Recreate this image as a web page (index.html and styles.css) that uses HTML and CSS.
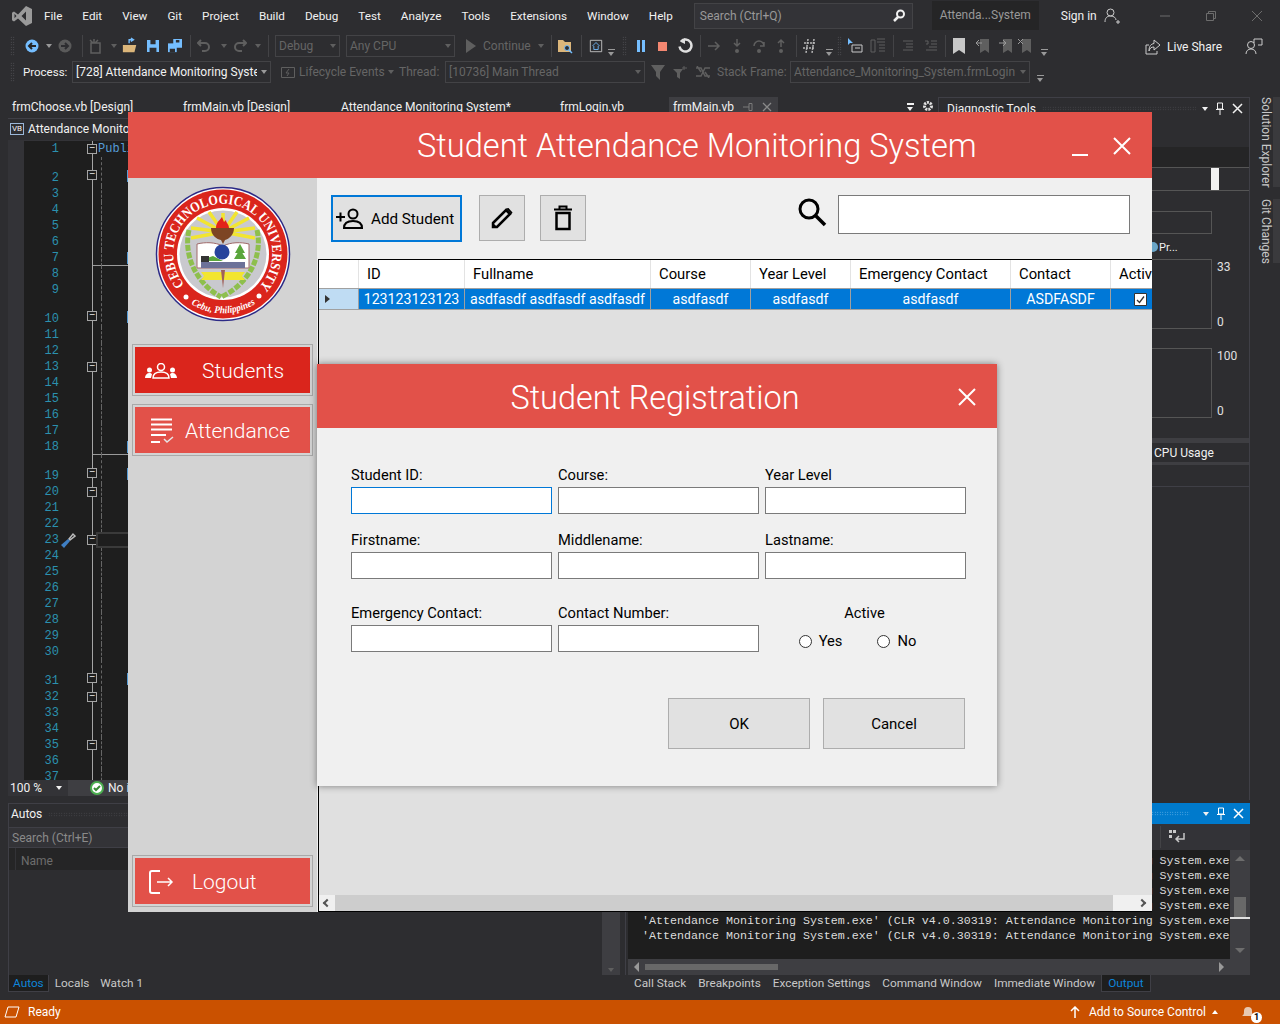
FILE: index.html
```html
<!DOCTYPE html>
<html lang="en">
<head>
<meta charset="UTF-8">
<title>Student Attendance Monitoring System</title>
<link rel="stylesheet" href="styles.css">
</head>
<body>
<div class="ide">

  <!-- menu bar -->
  <header class="menubar">
    <svg class="vs-logo" width="22" height="22" viewBox="0 0 22 22"><path d="M15 1l6 3v14l-6 3-8-7.5-4 3-2-1.2V7.700l2-1.200 4 3zM15 6.500L10.500 11 15 15.500zM3.500 8.800v4.400L5.500 11z" fill="#9a9a9a" fill-rule="evenodd"/></svg>
    <nav class="menu">
      <span>File</span><span>Edit</span><span>View</span><span>Git</span><span>Project</span><span>Build</span><span>Debug</span><span>Test</span><span>Analyze</span><span>Tools</span><span>Extensions</span><span>Window</span><span>Help</span>
    </nav>
    <div class="quick-search">
      <span>Search (Ctrl+Q)</span>
      <svg width="14" height="14" viewBox="0 0 14 14"><circle cx="8.500" cy="5" r="3.500" fill="none" stroke="#f1f1f1" stroke-width="2"/><path d="M6 8l-4 4" stroke="#f1f1f1" stroke-width="2.500"/></svg>
    </div>
    <div class="project-name">Attenda...System</div>
    <span class="sign-in">Sign in</span>
    <svg class="sign-icon" width="16" height="16" viewBox="0 0 16 16"><circle cx="6.500" cy="4.500" r="3.500" fill="none" stroke="#ccc"/><path d="M1 14c0-4 2-6 5.500-6S12 10 12 12M12 14h4M14 12v4" fill="none" stroke="#ccc"/></svg>
    <div class="win-controls">
      <svg width="12" height="12" viewBox="0 0 12 12"><path d="M1 6h10" stroke="#6d6d6d"/></svg>
      <svg width="12" height="12" viewBox="0 0 12 12"><path d="M1.500 3.500h7v7h-7zM3.500 3.500v-2h7v7h-2" fill="none" stroke="#6d6d6d"/></svg>
      <svg width="12" height="12" viewBox="0 0 12 12"><path d="M1 1l10 10M11 1L1 11" stroke="#6d6d6d"/></svg>
    </div>
  </header>

  <!-- standard + debug toolbar -->
  <div class="toolbar tb-main">
    <i class="s"><i class="grip"></i></i>
    <i class="s g4"><svg width="14" height="14" viewBox="0 0 14 14"><circle cx="7" cy="7" r="6.500" fill="#75beff"/><path d="M11 7H5M7 4L4 7l3 3" fill="none" stroke="#252526" stroke-width="2"/></svg></i>
    <i class="s g1"><i class="caret"></i></i>
    <i class="s"><svg width="14" height="14" viewBox="0 0 14 14"><circle cx="7" cy="7" r="6.500" fill="#5a5a5a"/><path d="M3 7h6M7 4l3 3-3 3" fill="none" stroke="#2d2d30" stroke-width="2"/></svg></i>
    <i class="s g1"><i class="sep"></i></i>
    <i class="s n2"><svg width="16" height="16" viewBox="0 0 16 16"><path d="M3 5h9v10H3zM6 1v4M2 2l3 3M10 2L7 5" fill="none" stroke="#5f5f5f" stroke-width="1.500"/></svg></i>
    <i class="s g2"><i class="caret dim"></i></i>
    <i class="s"><svg width="18" height="18" viewBox="0 0 18 18"><path d="M1 8h15l-2 8H1z" fill="#dcb67a"/><path d="M8 6V2h4M10 0l3 2-3 2" fill="none" stroke="#75beff" stroke-width="1.500"/></svg></i>
    <i class="s g7"><svg width="12" height="12" viewBox="0 0 14 14"><path d="M0 0h14v14H0z" fill="#75beff"/><path d="M4 0h6v5H4zM3 9h8v5H3z" fill="#2d2d30"/></svg></i>
    <i class="s g6"><svg width="14" height="14" viewBox="0 0 16 16"><path d="M0 5h10v10H0z" fill="#75beff"/><path d="M6 0h10v10H6z" fill="#75beff"/><path d="M9 1h4v3H9zM2 11h6v4H2z" fill="#2d2d30"/></svg></i>
    <i class="s n1"><i class="sep"></i></i>
    <i class="s n2"><svg width="14" height="14" viewBox="0 0 14 14"><path d="M4 1L1 4l3 3M1 4h7a4 4 0 0 1 0 8H5" fill="none" stroke="#5f5f5f" stroke-width="2"/></svg></i>
    <i class="s g4"><i class="caret dim"></i></i>
    <i class="s"><svg width="14" height="14" viewBox="0 0 14 14"><path d="M10 1l3 3-3 3M13 4H6a4 4 0 0 0 0 8h3" fill="none" stroke="#5f5f5f" stroke-width="2"/></svg></i>
    <i class="s g2"><i class="caret dim"></i></i>
    <i class="s n6"><i class="sep"></i></i>
    <span class="combo off w-debug n1">Debug<i class="caret dim"></i></span>
    <span class="combo off w-cpu g6">Any CPU<i class="caret dim"></i></span>
    <i class="s g8"><svg width="12" height="14" viewBox="0 0 12 14"><path d="M1 0l10 7-10 7z" fill="#5f5f5f"/></svg></i>
    <span class="tb-text off continue">Continue</span>
    <i class="s"><i class="caret dim"></i></i>
    <i class="s n6"><i class="sep"></i></i>
    <i class="s n2"><svg width="16" height="16" viewBox="0 0 16 16"><path d="M1 2h5l2 2h6v10H1z" fill="#dcb67a"/><circle cx="10" cy="10" r="2.500" fill="#2d2d30" stroke="#75beff"/><path d="M12 12l3 3" stroke="#75beff" stroke-width="1.500"/></svg></i>
    <i class="s"><i class="sep"></i></i>
    <i class="s n1"><svg width="14" height="14" viewBox="0 0 16 16"><path d="M1.500 1.500h13v13h-13z" fill="none" stroke="#c8c8c8"/><path d="M4 8l4-4 4 4M5.500 8v4h5V8" fill="none" stroke="#75beff"/></svg></i>
    <i class="s n1"><i class="drop"></i></i>
    <i class="s n3"><i class="grip"></i></i>
    <i class="s g1"><svg width="10" height="12" viewBox="0 0 10 12"><path d="M1 0h3v12H1zM6 0h3v12H6z" fill="#75beff"/></svg></i>
    <i class="s g5"><svg width="9" height="9" viewBox="0 0 10 10"><path d="M0 0h10v10H0z" fill="#f48771"/></svg></i>
    <i class="s g7"><svg width="16" height="16" viewBox="0 0 16 16"><path d="M4 3.500a6 6 0 1 1-1.500 5" fill="none" stroke="#e0e0e0" stroke-width="2.500"/><path d="M8 0L3 3.500 8 6z" fill="#e0e0e0"/></svg></i>
    <i class="s n1"><i class="sep"></i></i>
    <i class="s n2"><svg width="14" height="14" viewBox="0 0 14 14"><path d="M1 7h11M8 3l4 4-4 4" fill="none" stroke="#5f5f5f" stroke-width="1.500"/></svg></i>
    <i class="s g7"><svg width="10" height="16" viewBox="0 0 10 16"><path d="M5 1v7M2 5l3 3 3-3" fill="none" stroke="#5f5f5f" stroke-width="1.500"/><circle cx="5" cy="13" r="2" fill="#5f5f5f"/></svg></i>
    <i class="s g6"><svg width="14" height="16" viewBox="0 0 14 16"><path d="M2 8a5 5 0 0 1 10 0M12 4v4H8" fill="none" stroke="#5f5f5f" stroke-width="1.500"/><circle cx="7" cy="13" r="2" fill="#5f5f5f"/></svg></i>
    <i class="s g6"><svg width="10" height="16" viewBox="0 0 10 16"><path d="M5 9V2M2 5l3-3 3 3" fill="none" stroke="#5f5f5f" stroke-width="1.500"/><circle cx="5" cy="13" r="2" fill="#5f5f5f"/></svg></i>
    <i class="s n1"><i class="sep"></i></i>
    <i class="s n2"><svg width="16" height="16" viewBox="0 0 16 16"><path d="M2 5h12M1 10h12M6 1L4 15M12 1l-2 14" stroke="#b8b8b8" stroke-width="1.500" stroke-dasharray="2 1"/></svg></i>
    <i class="s g3"><i class="drop"></i></i>
    <i class="s n6"><i class="grip"></i></i>
    <i class="s"><svg width="16" height="16" viewBox="0 0 16 16"><path d="M1 0l5 5H3l-2 2z" fill="#75beff"/><path d="M5 7h10v7H5zM8 10h5" fill="none" stroke="#c8c8c8"/></svg></i>
    <i class="s g7"><svg width="16" height="16" viewBox="0 0 16 16"><path d="M1 2h4v12H1zM7 1h8M7 4h8M9 7h6M9 10h6M9 13h6" fill="none" stroke="#5f5f5f"/></svg></i>
    <i class="s n1"><i class="sep"></i></i>
    <i class="s n1"><svg width="14" height="14" viewBox="0 0 14 14"><path d="M2 2h10M5 5h7M5 8h7M2 11h10" stroke="#5f5f5f"/></svg></i>
    <i class="s g7"><svg width="14" height="14" viewBox="0 0 14 14"><path d="M1 2h3v3H2M7 2h6M7 5h6M5 8h8M2 11h11" fill="none" stroke="#5f5f5f"/></svg></i>
    <i class="s n2"><i class="sep"></i></i>
    <i class="s n2"><svg width="12" height="16" viewBox="0 0 12 16"><path d="M0 0h12v16l-6-4-6 4z" fill="#c8c8c8"/></svg></i>
    <i class="s g8"><svg width="14" height="16" viewBox="0 0 14 16"><path d="M4 1h9v14l-4-3-5 3z" fill="#5f5f5f"/><path d="M0 5h6M3 2L0 5l3 3" fill="none" stroke="#9a9a9a"/></svg></i>
    <i class="s g7"><svg width="14" height="16" viewBox="0 0 14 16"><path d="M4 1h9v14l-4-3-5 3z" fill="#5f5f5f"/><path d="M0 5h6M4 2l3 3-3 3" fill="none" stroke="#9a9a9a"/></svg></i>
    <i class="s g3"><svg width="14" height="16" viewBox="0 0 14 16"><path d="M4 1h9v14l-4-3-5 3z" fill="#5f5f5f"/><path d="M0 1l5 5M5 1L0 6" stroke="#9a9a9a"/></svg></i>
    <i class="s g3"><i class="drop"></i></i>
    <div class="live-share">
      <svg width="16" height="16" viewBox="0 0 16 16"><path d="M4 6H1v9h11v-3" fill="none" stroke="#ccc"/><path d="M9 1l6 5-6 5V8C6 8 5 9 4 12c0-5 2-7 5-7.500z" fill="none" stroke="#ccc"/></svg>
      <span>Live Share</span>
      <svg class="feedback" width="18" height="18" viewBox="0 0 18 18"><circle cx="6" cy="7" r="3.500" fill="none" stroke="#ccc"/><path d="M1 16c0-3 2-5 5-5s5 2 5 5M9 5V1h8v6h-4" fill="none" stroke="#ccc"/></svg>
    </div>
  </div>

  <div class="toolbar tb-debug">
    <i class="s"><i class="grip"></i></i>
    <span class="tb-text process">Process:</span>
    <span class="combo w-process"><em>[728] Attendance Monitoring System</em><i class="caret"></i></span>
    <i class="s lifecycle-icon"><svg width="14" height="14" viewBox="0 0 14 14"><path d="M.5 2.500h13v10H.5z" fill="none" stroke="#5f5f5f"/><path d="M8 4L5 8h3l-2 3" fill="none" stroke="#5f5f5f"/></svg></i>
    <span class="tb-text off lifecycle">Lifecycle Events</span>
    <i class="caret dim lc-caret"></i>
    <span class="tb-text off thread">Thread:</span>
    <span class="combo off w-thread"><em>[10736] Main Thread</em><i class="caret dim"></i></span>
    <i class="s filter-a"><svg width="14" height="16" viewBox="0 0 14 16"><path d="M0 1h14L9 8v8L5 12V8z" fill="#5f5f5f"/></svg></i>
    <i class="s g6"><svg width="14" height="14" viewBox="0 0 14 14"><path d="M0 4h10L7 8v6L4 12V8z" fill="#5f5f5f"/><path d="M9 3h5M11 1v4" stroke="#5f5f5f"/></svg></i>
    <i class="s g7"><svg width="14" height="12" viewBox="0 0 14 12"><path d="M0 2h5l4 8h5M0 10h5l4-8h5M1 0l4 6M9 6l4 6" fill="none" stroke="#5f5f5f" stroke-width="1.500"/></svg></i>
    <span class="tb-text off frame">Stack Frame:</span>
    <span class="combo off w-frame"><em>Attendance_Monitoring_System.frmLogin</em><i class="caret dim"></i></span>
    <i class="s drop-last"><i class="drop"></i></i>
  </div>

  <div class="workspace">
    <div class="upper">
      <!-- editor, almost all of it behind the running program -->
      <section class="editor-pane">
        <div class="doc-tabs">
          <span class="t-choose">frmChoose.vb [Design]</span>
          <span class="t-main">frmMain.vb [Design]</span>
          <span class="t-system">Attendance Monitoring System*</span>
          <span class="t-login">frmLogin.vb</span>
          <span class="t-active">frmMain.vb
            <svg width="12" height="10" viewBox="0 0 12 10"><path d="M1 5h6M7 1.500h3v7H7z" fill="none" stroke="#7a7a7a"/></svg>
            <svg width="10" height="10" viewBox="0 0 10 10"><path d="M1 1l8 8M9 1L1 9" stroke="#8a8a8a" stroke-width="1.300"/></svg>
          </span>
          <span class="tab-tools">
            <i class="drop light"></i>
            <svg width="12" height="12" viewBox="0 0 12 12"><circle cx="6" cy="6" r="3.500" fill="none" stroke="#e0e0e0" stroke-width="3" stroke-dasharray="2 1"/></svg>
          </span>
        </div>
        <div class="nav-bar"><i class="vb-badge">VB</i>Attendance Monitoring System</div>
        <div class="code">
          <div class="ln"><b>1</b><u></u><s><a>−</a></s><span class="src first">Public Class frmMain</span></div>
          <div class="ln lens"><b>2</b><u></u><s><a>−</a></s><span class="src"><i></i></span></div>
          <div class="ln"><b>3</b><u></u><s></s><span class="src"></span></div>
          <div class="ln"><b>4</b><u></u><s></s><span class="src"></span></div>
          <div class="ln"><b>5</b><u></u><s></s><span class="src"></span></div>
          <div class="ln"><b>6</b><u></u><s></s><span class="src"></span></div>
          <div class="ln rule"><b>7</b><u></u><s></s><span class="src"><i></i></span></div>
          <div class="ln"><b>8</b><u></u><s></s><span class="src"></span></div>
          <div class="ln"><b>9</b><u></u><s></s><span class="src"></span></div>
          <div class="ln lens"><b>10</b><u></u><s><a>−</a></s><span class="src"><i></i></span></div>
          <div class="ln"><b>11</b><u></u><s></s><span class="src"></span></div>
          <div class="ln"><b>12</b><u></u><s></s><span class="src"></span></div>
          <div class="ln"><b>13</b><u></u><s><a>−</a></s><span class="src"></span></div>
          <div class="ln"><b>14</b><u></u><s></s><span class="src"></span></div>
          <div class="ln"><b>15</b><u></u><s></s><span class="src"></span></div>
          <div class="ln"><b>16</b><u></u><s></s><span class="src"></span></div>
          <div class="ln"><b>17</b><u></u><s></s><span class="src"></span></div>
          <div class="ln rule"><b>18</b><u></u><s></s><span class="src"><i></i></span></div>
          <div class="ln lens"><b>19</b><u></u><s><a>−</a></s><span class="src"><i></i></span></div>
          <div class="ln"><b>20</b><u></u><s><a>−</a></s><span class="src"></span></div>
          <div class="ln"><b>21</b><u></u><s></s><span class="src"></span></div>
          <div class="ln"><b>22</b><u></u><s></s><span class="src"></span></div>
          <div class="ln cur"><b>23</b><u><svg width="16" height="16" viewBox="0 0 16 16"><path d="M9 7l4-5 2 2-5 4z" fill="none" stroke="#bbb" stroke-width="1.500"/><path d="M1 13l7-6 2 2-6 7z" fill="#3f7fc4"/></svg></u><s><a>−</a></s><span class="src"></span></div>
          <div class="ln"><b>24</b><u></u><s></s><span class="src"></span></div>
          <div class="ln"><b>25</b><u></u><s></s><span class="src"></span></div>
          <div class="ln"><b>26</b><u></u><s></s><span class="src"></span></div>
          <div class="ln"><b>27</b><u></u><s></s><span class="src"></span></div>
          <div class="ln"><b>28</b><u></u><s></s><span class="src"></span></div>
          <div class="ln"><b>29</b><u></u><s></s><span class="src"></span></div>
          <div class="ln"><b>30</b><u></u><s></s><span class="src"></span></div>
          <div class="ln lens"><b>31</b><u></u><s><a>−</a></s><span class="src"><i></i></span></div>
          <div class="ln"><b>32</b><u></u><s><a>−</a></s><span class="src"></span></div>
          <div class="ln"><b>33</b><u></u><s></s><span class="src"></span></div>
          <div class="ln"><b>34</b><u></u><s></s><span class="src"></span></div>
          <div class="ln"><b>35</b><u></u><s><a>−</a></s><span class="src"></span></div>
          <div class="ln"><b>36</b><u></u><s></s><span class="src"></span></div>
          <div class="ln"><b>37</b><u></u><s></s><span class="src"></span></div>
        </div>
        <div class="editor-foot">
          <span class="zoom-combo">100 %<i class="caret light"></i></span>
          <svg width="14" height="14" viewBox="0 0 14 14"><circle cx="7" cy="7" r="6" fill="#fff" stroke="#4caf50" stroke-width="2"/><path d="M4 7l2 2 4-4" fill="none" stroke="#388a34" stroke-width="2"/></svg>
          <span>No issues found</span>
        </div>
      </section>

      <!-- diagnostic tools -->
      <section class="diag">
        <div class="diag-head">
          <span>Diagnostic Tools</span>
          <i class="dots"></i>
          <span class="pane-btns"><i class="caret light"></i><svg width="10" height="14" viewBox="0 0 10 14"><path d="M2.500 1h5v6h-5zM1 7.500h8M5 8v5" fill="none" stroke="#f1f1f1"/></svg><svg width="11" height="11" viewBox="0 0 11 11"><path d="M1 1l9 9M10 1l-9 9" stroke="#f1f1f1" stroke-width="1.500"/></svg></span>
        </div>
        <div class="diag-band"></div>
        <div class="timeline"><i></i></div>
        <div class="diag-box"></div>
        <div class="proc"><i></i>Pr...</div>
        <div class="graph first-graph"><div class="plot"></div><div class="scale"><span>33</span><span>0</span></div></div>
        <div class="graph"><div class="plot"></div><div class="scale"><span>100</span><span>0</span></div></div>
        <div class="diag-strip"></div>
        <div class="cpu-tab">CPU Usage</div>
        <div class="diag-strip thin"></div>
        <div class="diag-line"></div>
      </section>
    </div>

    <div class="lower">
      <section class="autos">
        <div class="pane-title"><span>Autos</span><i class="dots"></i></div>
        <div class="pane-search">Search (Ctrl+E)</div>
        <div class="pane-cols"><span>Name</span></div>
        <div class="autos-body"><div class="vscroll"><i class="caret dim"></i></div></div>
      </section>
      <section class="output">
        <div class="output-title"><span>Output</span><i class="dots bright"></i><span class="pane-btns"><i class="caret light"></i><svg width="10" height="14" viewBox="0 0 10 14"><path d="M2.500 1h5v6h-5zM1 7.500h8M5 8v5" fill="none" stroke="#fff"/></svg><svg width="11" height="11" viewBox="0 0 11 11"><path d="M1 1l9 9M10 1l-9 9" stroke="#fff" stroke-width="1.500"/></svg></span></div>
        <div class="output-tools">
          <i class="sep"></i>
          <svg width="16" height="14" viewBox="0 0 16 14"><path d="M15 3v6H7M10 6L7 9l3 3" fill="none" stroke="#c8c8c8" stroke-width="1.500"/><path d="M0 0h3v3H0zM4 0h3v3H4zM0 5h3v3H0z" fill="#c8c8c8"/></svg>
        </div>
        <div class="output-body">
          <pre class="log">'Attendance Monitoring System.exe' (CLR v4.0.30319: Attendance Monitoring System.exe
'Attendance Monitoring System.exe' (CLR v4.0.30319: Attendance Monitoring System.exe
'Attendance Monitoring System.exe' (CLR v4.0.30319: Attendance Monitoring System.exe
'Attendance Monitoring System.exe' (CLR v4.0.30319: Attendance Monitoring System.exe
'Attendance Monitoring System.exe' (CLR v4.0.30319: Attendance Monitoring System.exe
'Attendance Monitoring System.exe' (CLR v4.0.30319: Attendance Monitoring System.exe</pre>
          <div class="log-scroll"><i class="up"></i><b></b><u></u><i class="down"></i></div>
        </div>
        <div class="log-hscroll"><i class="left"></i><b></b><i class="right"></i></div>
      </section>
    </div>

    <div class="bottom-tabs">
      <div class="tabs-left"><span class="on">Autos</span><span>Locals</span><span>Watch 1</span></div>
      <div class="tabs-right"><span>Call Stack</span><span>Breakpoints</span><span>Exception Settings</span><span>Command Window</span><span>Immediate Window</span><span class="on">Output</span></div>
    </div>

    <aside class="rail">
      <span class="rail-a">Solution Explorer</span>
      <span class="rail-b">Git Changes</span>
    </aside>
  </div>

  <footer class="statusbar">
    <svg width="16" height="12" viewBox="0 0 16 12"><path d="M4 1h11l-3 10H1z" fill="none" stroke="#fff"/></svg>
    <span class="ready">Ready</span>
    <div class="status-right">
      <svg width="10" height="12" viewBox="0 0 10 12"><path d="M5 12V2M1 5l4-4 4 4" fill="none" stroke="#fff" stroke-width="1.500"/></svg>
      <span>Add to Source Control</span>
      <i class="caret up-caret"></i>
      <span class="bell"><svg width="16" height="16" viewBox="0 0 16 16"><path d="M1 12c2-1 2-3 2-5a4 4 0 0 1 8 0c0 2 0 4 2 5z" fill="#e8c8b0"/></svg><b>1</b></span>
    </div>
  </footer>

  <!-- the running program -->
  <div class="app-window">
    <header class="app-head">
      <h1>Student Attendance Monitoring System</h1>
      <svg class="app-min" width="16" height="18" viewBox="0 0 16 18"><path d="M0 17h16" stroke="#fff" stroke-width="2"/></svg>
      <svg class="app-close" width="18" height="18" viewBox="0 0 18 18"><path d="M1 1l16 16M17 1L1 17" stroke="#fff" stroke-width="2"/></svg>
    </header>
    <div class="app-body">
      <aside class="sidebar">
        <svg class="seal" width="136" height="136" viewBox="0 0 136 136">
          <circle cx="68" cy="68" r="66.500" fill="#fff" stroke="#2c2a86" stroke-width="1.500"/>
          <circle cx="68" cy="68" r="64.500" fill="#da251c"/>
          <circle cx="68" cy="68" r="46" fill="#fff"/>
          <circle cx="68" cy="68" r="43.500" fill="#c9c9ce"/>
          <path d="M68 46L42 32M68 46L36 42M68 46l-32 6M68 46L54 26M68 46l14-20M68 46l26-14M68 46l32-4M68 46l32 6M68 46V27" stroke="#f2e530" stroke-width="3.500"/>
          <path d="M34 44C28 70 42 98 66 111M102 44c6 26-8 54-36 67" fill="none" stroke="#8ebf4d" stroke-width="5" stroke-dasharray="6 1.500"/>
          <path d="M67 31c-4 5-6 6-6 11h13c0-4-3-5-3-8l-2 2z" fill="#e2231a"/>
          <path d="M56 42h23c0 7-5 11-9 12l-2 4-2-4c-5-1-10-5-10-12z" fill="#7d4524"/>
          <path d="M42 58c8-2 18-2 26 2 8-4 18-4 26-2v24H42z" fill="#fff" stroke="#a06a6a"/>
          <path d="M46 76h44v6H46z" fill="#6c7199"/>
          <path d="M46 74l12-4 10 5H46z" fill="#5aa63c"/>
          <path d="M46 70h8v6h-8z" fill="#333"/>
          <circle cx="67" cy="66" r="7.500" fill="#27439c"/>
          <path d="M85 58l5 9h-10zM85 63l6 10H79z" fill="#5aa63c"/>
          <path d="M46 86h44l-3 4 3 4H46l3-4z" fill="#f2e530"/>
          <path d="M66 84h4l-2 18z" fill="#a0605a"/>
          <path id="ringTop" d="M29.400 98.500A49.500 49.500 0 1 1 106.600 98" fill="none"/>
          <path id="ringBottom" d="M36 118A60 60 0 0 0 100 118" fill="none"/>
          <text class="seal-top" fill="#fff"><textPath href="#ringTop" textLength="226" lengthAdjust="spacingAndGlyphs">CEBU TECHNOLOGICAL UNIVERSITY</textPath></text>
          <text class="seal-bottom" fill="#fff"><textPath href="#ringBottom" textLength="68" lengthAdjust="spacingAndGlyphs">Cebu, Philippines</textPath></text>
          <circle cx="31" cy="111" r="2.500" fill="#fff"/><circle cx="104" cy="110" r="2.500" fill="#fff"/>
        </svg>
        <button class="side-btn active">
          <svg class="ico-students" width="32" height="16" viewBox="0 0 32 16"><circle cx="16" cy="4" r="3.500" fill="none" stroke="#fff" stroke-width="1.500"/><path d="M8 15c0-4 3-6 8-6s8 2 8 6z" fill="none" stroke="#fff" stroke-width="1.500"/><circle cx="4.500" cy="7" r="2.500" fill="#fff"/><circle cx="27.500" cy="7" r="2.500" fill="#fff"/><path d="M0 15c0-3 2-5 4.500-5 1 0 2 .5 2.500 1l-1 4zM32 15c0-3-2-5-4.500-5-1 0-2 .5-2.500 1l1 4z" fill="#fff"/></svg>
          <span class="lbl-students">Students</span>
        </button>
        <button class="side-btn">
          <svg class="ico-att" width="24" height="26" viewBox="0 0 24 26"><path d="M1 1.500h21M1 6.500h21M1 11.500h21M1 17h15M1 24h9" stroke="#fff" stroke-width="2"/><path d="M14 21l3 3 6-5" fill="none" stroke="#e6e6e6" stroke-width="1.500"/></svg>
          <span class="lbl-att">Attendance</span>
        </button>
        <button class="side-btn logout">
          <svg class="ico-out" width="26" height="26" viewBox="0 0 26 26"><path d="M12 2H4Q2 2 2 4v18q0 2 2 2h8" fill="none" stroke="#fff" stroke-width="2"/><path d="M9 13h15M20 9l4 4-4 4" fill="none" stroke="#fff" stroke-width="1.500"/></svg>
          <span class="lbl-out">Logout</span>
        </button>
      </aside>
      <main class="content">
        <div class="actions">
          <button class="act-btn add">
            <svg width="30" height="22" viewBox="0 0 30 22"><circle cx="17" cy="6" r="4.500" fill="none" stroke="#000" stroke-width="2"/><path d="M8 20c0-5 4-7 9-7s9 2 9 7z" fill="none" stroke="#000" stroke-width="2"/><path d="M0 9h9M4.500 4.500v9" stroke="#000" stroke-width="2"/></svg>
            Add Student
          </button>
          <button class="act-btn square">
            <svg width="24" height="24" viewBox="0 0 24 24"><path d="M3 17L16 4l4 4L7 21H3z" fill="none" stroke="#000" stroke-width="2.500"/><path d="M16 2.500l5.500 5.500 1-1.500-4-4.500z" fill="#000"/><path d="M2 22l1-5 4 4z" fill="#000"/></svg>
          </button>
          <button class="act-btn square">
            <svg width="20" height="26" viewBox="0 0 20 26"><path d="M1 4.500h18M6.500 4V1.500h7V4" fill="none" stroke="#000" stroke-width="2"/><path d="M3.500 8h13v16h-13z" fill="none" stroke="#000" stroke-width="2.500"/></svg>
          </button>
          <svg class="search-ico" width="30" height="30" viewBox="0 0 30 30"><circle cx="12" cy="12" r="9" fill="none" stroke="#000" stroke-width="3"/><path d="M19 19l9 9" stroke="#000" stroke-width="3.500"/></svg>
          <div class="search-box"></div>
        </div>
        <div class="grid-view">
          <div class="dg-row dg-head">
            <span></span><span>ID</span><span>Fullname</span><span>Course</span><span>Year Level</span><span>Emergency Contact</span><span>Contact</span><span>Active</span>
          </div>
          <div class="dg-row dg-sel">
            <span class="row-mark"><i></i></span><span>123123123123</span><span>asdfasdf asdfasdf asdfasdf</span><span>asdfasdf</span><span>asdfasdf</span><span>asdfasdf</span><span>ASDFASDF</span>
            <span><svg width="13" height="13" viewBox="0 0 13 13"><path d="M.5.5h12v12H.5z" fill="#fff" stroke="#333"/><path d="M3 7l2.500 2.500L10 3.500" fill="none" stroke="#333" stroke-width="1.300"/></svg></span>
          </div>
          <div class="dg-fill"></div>
          <div class="dg-scroll"><i class="left"></i><b></b><i class="right"></i></div>
        </div>
      </main>
    </div>
  </div>

  <!-- registration dialog -->
  <div class="reg-dialog">
    <header class="reg-head">
      <h2>Student Registration</h2>
      <svg width="18" height="18" viewBox="0 0 18 18"><path d="M1 1l16 16M17 1L1 17" stroke="#fff" stroke-width="2"/></svg>
    </header>
    <form class="reg-form">
      <div class="field"><label>Student ID:</label><input class="focus" type="text"></div>
      <div class="field"><label>Course:</label><input type="text"></div>
      <div class="field"><label>Year Level</label><input type="text"></div>
      <div class="field"><label>Firstname:</label><input type="text"></div>
      <div class="field"><label>Middlename:</label><input type="text"></div>
      <div class="field"><label>Lastname:</label><input type="text"></div>
      <div class="field last"><label>Emergency Contact:</label><input type="text"></div>
      <div class="field last"><label>Contact Number:</label><input type="text"></div>
      <div class="field last active-field">
        <label>Active</label>
        <div class="radios">
          <span class="radio"><i></i>Yes</span>
          <span class="radio"><i></i>No</span>
        </div>
      </div>
      <div class="reg-actions">
        <button type="button">OK</button>
        <button type="button">Cancel</button>
      </div>
    </form>
  </div>
</div>
</body>
</html>
```

FILE: styles.css
```css
* {
  box-sizing: border-box;
}
html, body {
  margin: 0;
  padding: 0;
}
body {
  font-family: "Roboto", "Liberation Sans", sans-serif;
  background-color: #2d2d30;
}
i, em, s, u, small {
  font-style: normal;
  text-decoration: none;
}
.ide {
  position: relative;
  width: 1280px;
  height: 1024px;
  overflow: hidden;
  display: flex;
  flex-direction: column;
  color: #f1f1f1;
  font-size: 12px;
  background-color: #2d2d30;
}

/* small toolbar parts */
.caret {
  display: inline-block;
  width: 0;
  height: 0;
  border-left: 3.5px solid transparent;
  border-right: 3.5px solid transparent;
  border-top: 4px solid #999;
}
.caret.dim {
  border-top-color: #5f5f5f;
}
.caret.light {
  border-top-color: #f1f1f1;
}
.drop {
  display: block;
  width: 7px;
  height: 6px;
  border-top: 1px solid #999;
  position: relative;
  top: 6px;
}
.drop::after {
  content: "";
  position: absolute;
  top: 2px;
  left: 0;
  border-left: 3.5px solid transparent;
  border-right: 3.5px solid transparent;
  border-top: 4px solid #999;
}
.drop.light {
  top: 0;
  border-top: 2px solid #f1f1f1;
}
.drop.light::after {
  border-top-color: #f1f1f1;
}
.sep {
  display: block;
  width: 1px;
  height: 22px;
  background-color: #434346;
}
.grip {
  display: block;
  width: 5px;
  height: 20px;
  background-image: radial-gradient(#5a5a5e 0.7px, transparent 0.8px);
  background-size: 2.5px 2.5px;
}
.dots {
  flex: 1;
  height: 5px;
  margin: 0 6px;
  background-image: radial-gradient(#4a4a4e 0.7px, transparent 0.8px);
  background-size: 2.5px 2.5px;
}
.dots.bright {
  background-image: radial-gradient(#6fb8e8 0.7px, transparent 0.8px);
}
.s {
  flex: none;
  display: flex;
  align-items: center;
  justify-content: center;
  width: 16px;
  height: 22px;
}
.g1 { margin-left: 1px; }
.g2 { margin-left: 2px; }
.g3 { margin-left: 3px; }
.g4 { margin-left: 4px; }
.g5 { margin-left: 5px; }
.g6 { margin-left: 6px; }
.g7 { margin-left: 7px; }
.g8 { margin-left: 8px; }
.n1 { margin-left: -1px; }
.n2 { margin-left: -2px; }
.n3 { margin-left: -3px; }
.n6 { margin-left: -6px; }

/* menu bar */
.menubar {
  display: flex;
  align-items: center;
  height: 31px;
  flex: none;
}
.vs-logo {
  margin-left: 11px;
}
.menu {
  display: flex;
  gap: 20px;
  margin-left: 11px;
  font-size: 11.7px;
}
.quick-search {
  display: flex;
  align-items: center;
  justify-content: space-between;
  width: 219px;
  height: 26px;
  margin-left: 21px;
  padding: 0 6px 0 5px;
  background-color: #333337;
  border: 1px solid #434346;
  color: #999;
}
.project-name {
  width: 107px;
  height: 29px;
  margin-left: 19px;
  line-height: 29px;
  text-align: center;
  background-color: #252526;
  color: #999;
}
.sign-in {
  margin-left: 22px;
}
.sign-icon {
  margin-left: 7px;
}
.win-controls {
  display: flex;
  gap: 34px;
  margin-left: 39px;
}

/* toolbars */
.toolbar {
  display: flex;
  align-items: center;
  flex: none;
  padding-left: 4px;
}
.tb-main {
  height: 28px;
  padding-top: 2px;
}
.tb-debug {
  height: 26px;
}
.tb-text {
  flex: none;
  white-space: nowrap;
}
.off {
  color: #656565;
}
.combo {
  flex: none;
  display: flex;
  align-items: center;
  justify-content: space-between;
  height: 22px;
  padding: 0 3px 0 3px;
  border: 1px solid #434346;
  white-space: nowrap;
  overflow: hidden;
}
.combo em {
  overflow: hidden;
  flex: 1;
  margin-right: 4px;
}
.w-debug { width: 65px; }
.w-cpu { width: 109px; }
.w-process { width: 199px; }
.w-thread { width: 200px; }
.w-frame { width: 240px; }
.continue {
  width: 50px;
  margin-left: 4px;
}
.live-share {
  display: flex;
  align-items: center;
  margin-left: 93px;
  margin-top: 2px;
  gap: 6px;
}
.feedback {
  margin-left: 17px;
}
.process {
  margin-left: 3px;
  width: 45px;
  font-size: 11.5px;
}
.w-process {
  margin-left: 4px;
}
.lifecycle-icon {
  margin-left: 9px;
}
.lifecycle {
  margin-left: 3px;
  width: 86px;
}
.lc-caret {
  margin-left: 3px;
}
.thread {
  margin-left: 5px;
  width: 41px;
}
.w-thread {
  margin-left: 5px;
}
.filter-a {
  margin-left: 5px;
}
.frame {
  margin-left: 6px;
  width: 68px;
}
.w-frame {
  margin-left: 5px;
}
.drop-last {
  margin-left: 2px;
}

/* workspace below the toolbars */
.workspace {
  flex: 1;
  display: grid;
  grid-template-columns: 1242px 30px;
  grid-template-rows: 715px 175px 1fr;
  padding-left: 8px;
}
.upper {
  display: flex;
  gap: 2px;
  padding-top: 12px;
  min-height: 0;
}
.editor-pane {
  width: 928px;
  display: flex;
  flex-direction: column;
}
.doc-tabs {
  position: relative;
  display: flex;
  align-items: flex-start;
  height: 21px;
  padding-top: 3px;
  flex: none;
}
.doc-tabs span {
  flex: none;
}
.t-choose { margin-left: 4px; width: 171px; }
.t-main { width: 158px; }
.t-system { width: 219px; }
.t-login { width: 109px; }
.t-active {
  display: flex;
  align-items: center;
  width: 109px;
  height: 20px;
  padding-left: 4px;
  margin-top: -3px;
  background-color: #3e3e42;
}
.t-active svg {
  margin-left: 8px;
  flex: none;
}
.tab-tools {
  display: flex;
  align-items: center;
  gap: 8px;
  margin-left: 129px;
}
.nav-bar {
  display: flex;
  align-items: center;
  gap: 4px;
  height: 22px;
  flex: none;
  padding-left: 2px;
  padding-bottom: 1px;
  border-top: 1px solid #3f3f46;
  white-space: nowrap;
  overflow: hidden;
}
.vb-badge {
  width: 14px;
  height: 12px;
  font-size: 8px;
  line-height: 10px;
  text-align: center;
  border: 1px solid #9bb7d8;
}
.code {
  flex: 1;
  min-height: 0;
  overflow: hidden;
  padding: 1px 0 0 16px;
  background-color: #333337;
}
.ln {
  display: flex;
  height: 16px;
  font-family: "Liberation Mono", monospace;
  font-size: 12px;
  line-height: 16px;
  background-color: #1e1e1e;
}
.ln.lens {
  height: 29px;
  align-items: stretch;
}
.ln.lens b, .ln.lens a, .ln.lens .src i {
  margin-top: 13px;
}
.ln.rule {
  background-image: linear-gradient(#9a9a9a, #9a9a9a);
  background-repeat: no-repeat;
  background-position: 68px 100%;
  background-size: 100% 1px;
}
.ln b {
  flex: none;
  width: 35px;
  font-weight: normal;
  text-align: right;
  color: #2b91af;
}
.ln u {
  flex: none;
  display: flex;
  align-items: center;
  width: 27px;
  padding-left: 1px;
}
.ln s {
  flex: none;
  display: block;
  width: 12px;
  background: linear-gradient(#a5a5a5, #a5a5a5) center / 1px 100% no-repeat;
}
.ln a {
  display: block;
  width: 10px;
  height: 10px;
  margin: 3px 1px;
  background-color: #1e1e1e;
  border: 1px solid #a5a5a5;
  color: #f1f1f1;
  font-size: 10px;
  line-height: 8px;
  text-align: center;
}
.ln.lens a {
  margin-bottom: 0;
}
.src {
  display: block;
  flex: 1;
  margin-left: 3px;
  border-left: 1px dashed #666;
  white-space: nowrap;
}
.src.first {
  margin-left: 0;
  border-left: 0;
  color: #569cd6;
}
.src i {
  display: block;
  width: 2px;
  height: 12px;
  margin-left: 25px;
  margin-top: 2px;
  background-color: #569cd6;
}
.ln.cur .src {
  margin-left: -2px;
  border: 2px solid #3a3a3a;
}
.editor-foot {
  display: flex;
  align-items: center;
  gap: 4px;
  height: 16px;
  flex: none;
  color: #f1f1f1;
  background-color: #3e3e42;
  margin-bottom: 4px;
}
.zoom-combo {
  display: flex;
  align-items: center;
  justify-content: space-between;
  width: 60px;
  height: 16px;
  padding: 0 6px 1px 2px;
  margin-right: 18px;
  background-color: #333337;
}

/* diagnostics */
.diag {
  flex: 1;
  display: flex;
  flex-direction: column;
  border: 1px solid #3f3f46;
  border-bottom: 0;
  height: 703px;
}
.diag-head {
  display: flex;
  justify-content: space-between;
  align-items: center;
  height: 21px;
  padding: 0 6px 0 8px;
  flex: none;
}
.pane-btns {
  display: flex;
  align-items: center;
  gap: 7px;
}
.diag-band {
  margin-top: 28px;
  flex: none;
  background-color: #252526;
  height: 20px;
}
.timeline {
  display: flex;
  justify-content: flex-end;
  height: 24px;
  flex: none;
  padding-right: 30px;
  border-top: 1px solid #555;
  border-bottom: 1px solid #555;
}
.timeline i {
  width: 8px;
  background-color: #f1f1f1;
}
.diag-box {
  width: 273px;
  height: 23px;
  flex: none;
  margin-top: 20px;
  border: 1px solid #555;
}
.proc {
  display: flex;
  align-items: center;
  height: 14px;
  margin-top: 6px;
  margin-left: 205px;
  font-size: 11px;
  flex: none;
  padding-left: 4px;
}
.proc i {
  width: 10px;
  height: 10px;
  border-radius: 50%;
  margin-right: 1px;
  background-color: #6aa6c8;
}
.graph {
  display: flex;
  height: 70px;
  margin-top: 19px;
  flex: none;
}
.first-graph {
  margin-top: 5px;
}
.plot {
  width: 273px;
  border: 1px solid #555;
}
.scale {
  display: flex;
  flex-direction: column;
  justify-content: space-between;
  padding: 1px 0 0 5px;
  color: #e0e0e0;
}
.diag-strip {
  height: 5px;
  margin-top: 20px;
  flex: none;
  background-color: #3e3e42;
}
.cpu-tab {
  height: 19px;
  line-height: 21px;
  padding-left: 215px;
  flex: none;
  white-space: nowrap;
}
.diag-strip.thin {
  height: 3px;
  margin-top: 0;
}
.diag-line {
  height: 1px;
  margin-top: 21px;
  background-color: #3f3f46;
}

/* lower panes */
.lower {
  display: flex;
  gap: 2px;
  padding-top: 3px;
}
.autos {
  width: 618px;
  display: flex;
  flex-direction: column;
  border: 1px solid #3f3f46;
  border-bottom: 0;
}
.pane-title {
  display: flex;
  align-items: center;
  height: 23px;
  padding: 0 0 3px 2px;
  flex: none;
}
.pane-search {
  height: 21px;
  line-height: 20px;
  padding-left: 3px;
  flex: none;
  color: #8a8a8a;
  border-top: 1px solid #3f3f46;
  border-bottom: 1px solid #3f3f46;
  background-color: #333337;
}
.pane-cols {
  height: 22px;
  flex: none;
  padding: 2px 0 0 12px;
  line-height: 22px;
  color: #6d6d6d;
  background-color: #252526;
  background-image: linear-gradient(#333337, #333337);
  background-repeat: no-repeat;
  background-size: 1px 100%;
  background-position: 6px 0;
}
.autos-body {
  flex: 1;
  display: flex;
  justify-content: flex-end;
  padding-right: 5px;
  background-color: #2d2d30;
}
.vscroll {
  display: flex;
  align-items: flex-end;
  justify-content: center;
  width: 18px;
  padding-bottom: 3px;
  background-color: #3e3e42;
}
.output {
  flex: 1;
  display: flex;
  flex-direction: column;
}
.output-title {
  display: flex;
  justify-content: space-between;
  align-items: center;
  height: 21px;
  flex: none;
  padding: 0 6px 0 5px;
  background-color: #007acc;
}
.output-title .dots {
  margin-right: 13px;
  margin-left: 480px;
}
.output-tools {
  display: flex;
  align-items: center;
  gap: 8px;
  height: 26px;
  padding-left: 532px;
  flex: none;
  background-color: #333337;
}
.output-body {
  flex: 1;
  display: flex;
  min-height: 0;
  background-color: #1e1e1e;
}
.log {
  flex: 1;
  min-width: 0;
  margin: 0;
  padding: 4px 0 0 14px;
  overflow: hidden;
  font-family: "Liberation Mono", monospace;
  font-size: 11.67px;
  line-height: 15px;
  color: #dcdcdc;
}
.log-scroll {
  flex: none;
  display: flex;
  flex-direction: column;
  align-items: center;
  width: 20px;
  background-color: #3e3e42;
}
.log-scroll b {
  display: block;
  width: 12px;
  height: 20px;
  margin-top: 36px;
  background-color: #686868;
}
.log-scroll u {
  display: block;
  width: 100%;
  height: 2px;
  background-color: #e0e0e0;
}
.log-scroll .up, .log-scroll .down {
  border-left: 5px solid transparent;
  border-right: 5px solid transparent;
}
.log-scroll .up {
  margin-top: 6px;
  border-bottom: 5px solid #6d6d6d;
}
.log-scroll .down {
  margin-top: auto;
  margin-bottom: 6px;
  border-top: 5px solid #6d6d6d;
}
.log-hscroll {
  display: flex;
  align-items: center;
  height: 16px;
  flex: none;
  padding-left: 6px;
  background-color: #3e3e42;
}
.log-hscroll b {
  width: 133px;
  height: 6px;
  margin-left: 6px;
  background-color: #686868;
}
.log-hscroll .left {
  border-top: 5px solid transparent;
  border-bottom: 5px solid transparent;
  border-right: 5px solid #999;
}
.log-hscroll .right {
  margin-left: auto;
  margin-right: 26px;
  border-top: 5px solid transparent;
  border-bottom: 5px solid transparent;
  border-left: 5px solid #999;
}
.bottom-tabs {
  display: flex;
  height: 25px;
  color: #c8c8c8;
  font-size: 11.8px;
}
.tabs-left, .tabs-right {
  display: flex;
  align-items: flex-start;
  height: 17px;
  gap: 12px;
}
.tabs-left {
  width: 620px;
  gap: 11px;
}
.tabs-left .on {
  padding: 0 4px;
  margin-right: -5px;
}
.tabs-right {
  padding-left: 6px;
}
.tabs-right .on {
  padding: 0 6px;
  margin-left: -6px;
}
.bottom-tabs span {
  height: 17px;
  line-height: 16px;
}
.bottom-tabs .on {
  color: #0e84d8;
  background-color: #1e1e1e;
  border: 1px solid #3f3f46;
  border-top: 0;
}
.rail {
  grid-column: 2;
  grid-row: 1 / span 3;
  display: flex;
  flex-direction: column;
  align-items: flex-start;
  gap: 12px;
  padding-top: 12px;
  color: #c8c8c8;
}
.rail span {
  writing-mode: vertical-rl;
  width: 30px;
  padding-left: 3px;
  border-right: 7px solid #3a3a3d;
  white-space: nowrap;
}
.rail-a {
  height: 90px;
}
.rail-b {
  height: 64px;
}

/* status bar */
.statusbar {
  display: flex;
  align-items: center;
  height: 24px;
  flex: none;
  padding-left: 4px;
  background-color: #ca5100;
  color: #fff;
}
.ready {
  margin-left: 8px;
}
.status-right {
  display: flex;
  align-items: center;
  margin-left: auto;
  padding-right: 23px;
}
.status-right span {
  margin-left: 9px;
}
.up-caret {
  margin-left: 6px;
  border-top: 0;
  border-bottom: 4px solid #fff;
}
.status-right .bell {
  position: relative;
  margin-left: 23px;
  display: block;
  height: 16px;
}
.bell b {
  position: absolute;
  right: -5px;
  bottom: -3px;
  width: 11px;
  height: 11px;
  border-radius: 50%;
  font-size: 9px;
  line-height: 11px;
  text-align: center;
  color: #000;
  background-color: #fff;
}

/* main program window */
.app-window {
  position: absolute;
  left: 128px;
  top: 112px;
  width: 1024px;
  height: 800px;
  display: flex;
  flex-direction: column;
  background-color: #f0f0f0;
  color: #000;
}
.app-head {
  display: flex;
  align-items: center;
  height: 66px;
  flex: none;
  background-color: #e25149;
  color: #fff;
}
.app-head h1 {
  margin: 2px 0 0 289px;
  font-size: 32.6px;
  font-weight: 300;
  white-space: nowrap;
}
.app-min {
  margin-left: 95px;
  margin-top: 4px;
}
.app-close {
  margin-left: 25px;
  margin-top: 1px;
}
.app-body {
  flex: 1;
  display: flex;
  min-height: 0;
}
.sidebar {
  width: 189px;
  flex: none;
  display: flex;
  flex-direction: column;
  align-items: center;
  background-color: #d3d3d3;
  padding: 8px 0 5px;
}
.seal-top {
  font-family: "Liberation Serif", serif;
  font-weight: bold;
  font-size: 14px;
}
.seal-bottom {
  font-family: "Liberation Serif", serif;
  font-weight: bold;
  font-style: italic;
  font-size: 10px;
}
.side-btn {
  display: flex;
  align-items: center;
  width: 181px;
  height: 52px;
  flex: none;
  padding: 2px 0 0;
  margin-top: 8px;
  background-color: #da251c;
  border: 1px solid #a9a9a9;
  box-shadow: inset 0 0 0 2px #d3d3d3;
  color: #fff;
  font-family: inherit;
  font-size: 21px;
  font-weight: 300;
}
.side-btn.active {
  margin-top: 22px;
}
.side-btn + .side-btn:not(.logout) {
  background-color: #e25149;
}
.side-btn.logout {
  margin-top: auto;
  background-color: #e25149;
}
.ico-students {
  margin-left: 12px;
}
.lbl-students {
  margin-left: 25px;
}
.ico-att {
  margin-left: 17px;
}
.lbl-att {
  margin-left: 11px;
}
.ico-out {
  margin-left: 15px;
}
.lbl-out {
  margin-left: 18px;
}
.content {
  flex: 1;
  min-width: 0;
  display: flex;
  flex-direction: column;
}
.actions {
  display: flex;
  align-items: flex-start;
  height: 81px;
  flex: none;
  padding: 17px 0 0 14px;
}
.act-btn {
  display: flex;
  align-items: center;
  justify-content: center;
  height: 46px;
  padding: 0;
  background-color: #e1e1e1;
  border: 1px solid #adadad;
  color: #000;
  font-family: inherit;
  font-size: 15px;
}
.act-btn.add {
  justify-content: flex-start;
  width: 131px;
  height: 47px;
  gap: 5px;
  padding-left: 3px;
  margin-right: 17px;
  border: 2px solid #0078d7;
  font-size: 15.2px;
  white-space: nowrap;
}
.act-btn.square {
  width: 46px;
  margin-right: 15px;
}
.search-ico {
  margin-left: 196px;
  margin-top: 2px;
}
.search-box {
  width: 292px;
  height: 39px;
  margin-left: 11px;
  background-color: #fff;
  border: 1px solid #7a7a7a;
}
.grid-view {
  flex: 1;
  min-height: 0;
  display: flex;
  flex-direction: column;
  margin-left: 1px;
  background-color: #e0e0e0;
  border-top: 1px solid #000;
  border-left: 1px solid #000;
  border-bottom: 1px solid #000;
  overflow: hidden;
}
.dg-row {
  display: grid;
  grid-template-columns: 40px 106px 186px 100px 100px 160px 100px 60px;
  flex: none;
  white-space: nowrap;
}
.dg-head {
  height: 28px;
  font-size: 14.8px;
  background-color: #fff;
}
.dg-head span {
  padding-left: 8px;
  line-height: 29px;
  border-right: 1px solid #e3e3e3;
  overflow: hidden;
}
.dg-sel {
  height: 22px;
  font-size: 14.2px;
  color: #fff;
  background-color: #0078d7;
  border-top: 1px solid #a0a0a0;
  border-bottom: 1px solid #a0a0a0;
}
.dg-sel span {
  display: flex;
  align-items: center;
  justify-content: center;
  border-right: 1px solid #a0a0a0;
}
.dg-sel .row-mark {
  justify-content: flex-start;
  padding-left: 6px;
  background-color: #bfdcf3;
}
.row-mark i {
  border-top: 4px solid transparent;
  border-bottom: 4px solid transparent;
  border-left: 5px solid #333;
}
.dg-fill {
  flex: 1;
}
.dg-scroll {
  display: flex;
  align-items: center;
  height: 16px;
  flex: none;
  background-color: #f0f0f0;
  padding: 0 5px;
}
.dg-scroll b {
  width: 778px;
  height: 16px;
  margin-left: 5px;
  background-color: #cdcdcd;
}
.dg-scroll .left, .dg-scroll .right {
  width: 6px;
  height: 6px;
  border-left: 2px solid #555;
  border-bottom: 2px solid #555;
  transform: rotate(45deg);
}
.dg-scroll .right {
  margin-left: auto;
  margin-right: 2px;
  transform: rotate(225deg);
}

/* registration dialog */
.reg-dialog {
  position: absolute;
  left: 317px;
  top: 364px;
  width: 680px;
  height: 422px;
  background-color: #f0f0f0;
  color: #000;
  box-shadow: 0 0 7px rgba(0, 0, 0, 0.45);
}
.reg-head {
  display: flex;
  align-items: center;
  justify-content: center;
  position: relative;
  height: 64px;
  background-color: #e25149;
  color: #fff;
}
.reg-head h2 {
  margin: 3px 4px 0 0;
  font-size: 32.4px;
  font-weight: 300;
}
.reg-head svg {
  position: absolute;
  right: 21px;
  top: 24px;
}
.reg-form {
  display: grid;
  grid-template-columns: repeat(3, 201px);
  column-gap: 6px;
  row-gap: 16px;
  padding: 37px 0 0 34px;
}
.field {
  display: flex;
  flex-direction: column;
}
.field.last {
  margin-top: 8px;
}
.field label {
  height: 22px;
  line-height: 21px;
  font-size: 14.7px;
}
.field input {
  width: 201px;
  height: 27px;
  margin: 0;
  background-color: #fff;
  border: 1px solid #7a7a7a;
  border-radius: 0;
  outline: none;
}
.field input.focus {
  border-color: #0078d7;
}
.active-field label {
  text-align: center;
  padding-right: 2px;
}
.radios {
  display: flex;
  justify-content: center;
  gap: 35px;
  padding-right: 16px;
  margin-top: 7px;
}
.radio {
  display: flex;
  align-items: center;
  gap: 7px;
  font-size: 14.7px;
}
.radio i {
  width: 13px;
  height: 13px;
  border: 1px solid #333;
  border-radius: 50%;
  background-color: #fff;
}
.reg-actions {
  grid-column: 1 / span 3;
  display: flex;
  justify-content: flex-end;
  gap: 13px;
  margin: 30px 1px 0 0;
}
.reg-actions button {
  width: 142px;
  height: 51px;
  background-color: #e1e1e1;
  border: 1px solid #adadad;
  font-family: inherit;
  font-size: 15px;
}
```
